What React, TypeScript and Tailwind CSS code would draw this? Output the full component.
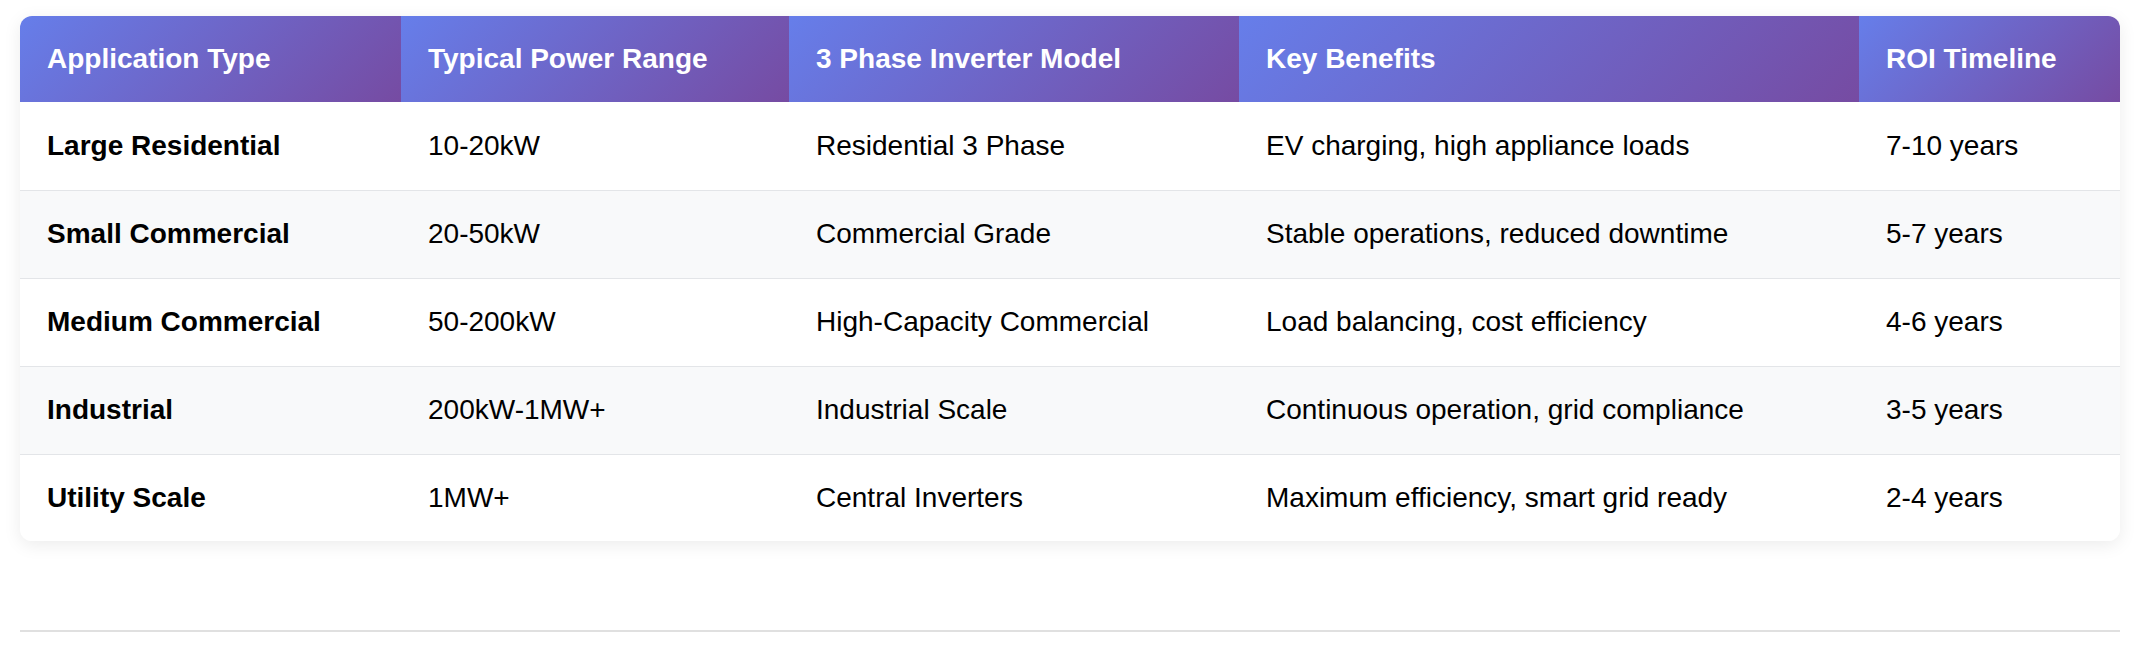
import React from "react";

const rows = [
  ["Large Residential", "10-20kW", "Residential 3 Phase", "EV charging, high appliance loads", "7-10 years"],
  ["Small Commercial", "20-50kW", "Commercial Grade", "Stable operations, reduced downtime", "5-7 years"],
  ["Medium Commercial", "50-200kW", "High-Capacity Commercial", "Load balancing, cost efficiency", "4-6 years"],
  ["Industrial", "200kW-1MW+", "Industrial Scale", "Continuous operation, grid compliance", "3-5 years"],
  ["Utility Scale", "1MW+", "Central Inverters", "Maximum efficiency, smart grid ready", "2-4 years"],
];

const headers = ["Application Type", "Typical Power Range", "3 Phase Inverter Model", "Key Benefits", "ROI Timeline"];
const widths = [381, 388, 450, 620, 261];

export default function App() {
  return (
    <div className="min-h-[648px] bg-white px-[20px] pt-[16px] [font-family:'Liberation_Sans',Arial,sans-serif]">
      <div className="overflow-hidden rounded-[12px] bg-white shadow-[0_4px_18px_rgba(0,0,0,0.08)]">
        <table className="w-full table-fixed border-collapse text-[28px] leading-[32px]">
          <colgroup>
            {widths.map((w, i) => (
              <col key={i} style={{ width: w }} />
            ))}
          </colgroup>
          <thead>
            <tr>
              {headers.map((h) => (
                <th
                  key={h}
                  className="h-[86px] bg-[linear-gradient(135deg,#667eea_0%,#764ba2_100%)] px-[27px] text-left font-bold text-white"
                >
                  {h}
                </th>
              ))}
            </tr>
          </thead>
          <tbody>
            {rows.map((r, i) => (
              <tr
                key={i}
                className={`${i % 2 === 1 ? "bg-[#f8f9fa]" : "bg-white"} ${i < rows.length - 1 ? "border-b border-[#e3e5e8]" : ""}`}
              >
                {r.map((c, j) => (
                  <td
                    key={j}
                    className={`${i < rows.length - 1 ? "h-[88px]" : "h-[87px]"} px-[27px] text-[#000] ${j === 0 ? "font-bold" : "font-normal"}`}
                  >
                    {c}
                  </td>
                ))}
              </tr>
            ))}
          </tbody>
        </table>
      </div>
      <div className="mt-[89px] h-[2px] bg-[#e0e0e0]" />
    </div>
  );
}
